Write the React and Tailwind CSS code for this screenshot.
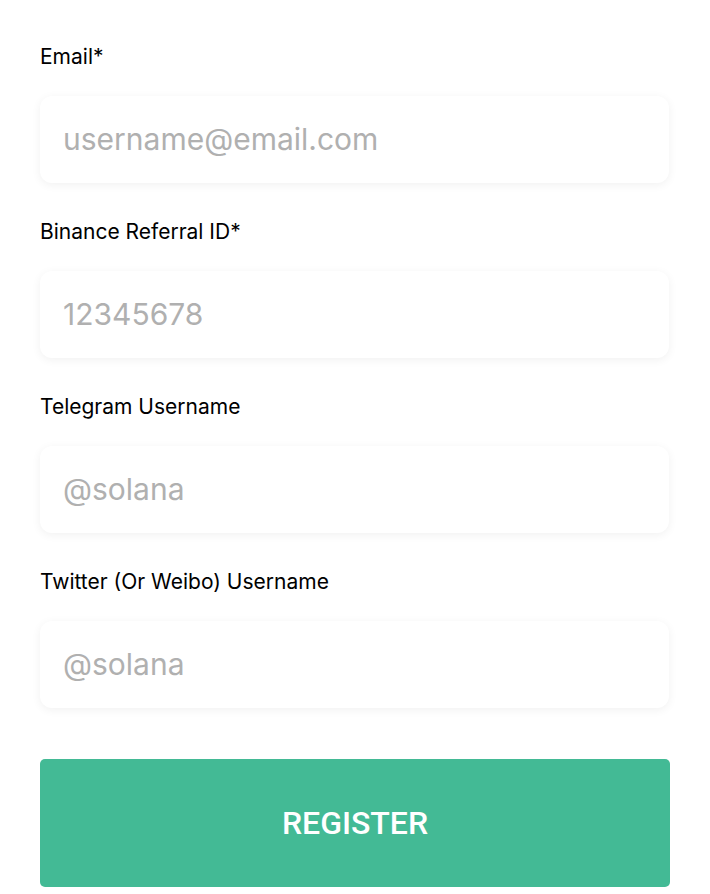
export default function App() {
  const fields = [
    { label: "Email*", ph: "username@email.com" },
    { label: "Binance Referral ID*", ph: "12345678" },
    { label: "Telegram Username", ph: "@solana" },
    { label: "Twitter (Or Weibo) Username", ph: "@solana" },
  ];
  return (
    <div className="min-h-[894px] w-[710px] bg-white px-10 pt-[44px] flex flex-col" style={{ fontFamily: "Inter, 'Noto Sans', sans-serif" }}>
      <div className="flex flex-col gap-[36px]">
        {fields.map((f, i) => (
          <div key={i} className="flex flex-col gap-[26px]">
            <div className="text-[21px] leading-[26px] text-black">{f.label}</div>
            <div className="h-[87px] w-[629px] rounded-[12px] bg-white shadow-[0_2px_10px_rgba(0,0,0,0.06)] flex items-center px-[23px]">
              <span className="text-[30px] text-[#b0b0b0]">{f.ph}</span>
            </div>
          </div>
        ))}
      </div>
      <button className="mt-[51px] flex h-[128px] w-[630px] items-center justify-center rounded-[5px] bg-[#43ba95] text-[32px] font-medium text-white" style={{ fontFamily: "Roboto, sans-serif" }}>
        REGISTER
      </button>
    </div>
  );
}
